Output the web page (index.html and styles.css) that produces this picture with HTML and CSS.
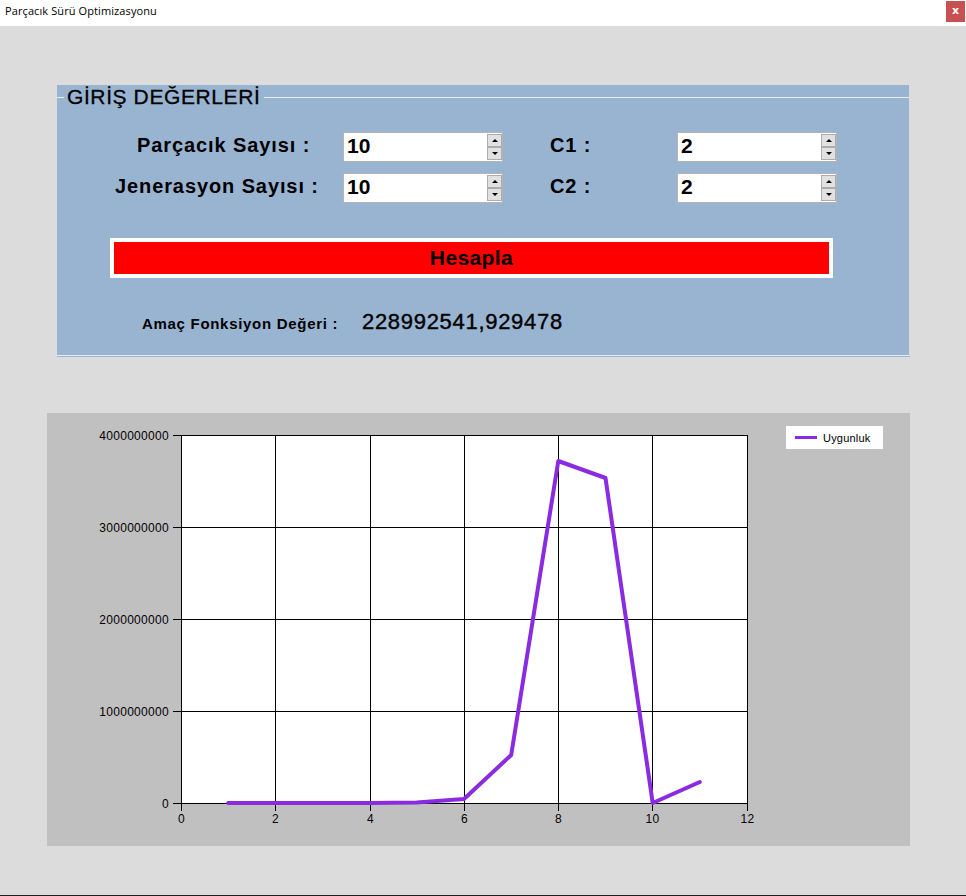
FILE: index.html
```html
<!DOCTYPE html>
<html lang="tr">
<head>
<meta charset="utf-8">
<title>Parçacık Sürü Optimizasyonu</title>
<link rel="stylesheet" href="styles.css">
</head>
<body>
<div class="titlebar">
  <span class="title">Parçacık Sürü Optimizasyonu</span>
  <span class="close">x</span>
</div>
<div class="content">
  <div class="group">
    <div class="group-head">
      <span class="hline short"></span>
      <span class="group-title">GİRİŞ DEĞERLERİ</span>
      <span class="hline long"></span>
    </div>
    <div class="row row1">
      <span class="lbl lbl-p">Parçacık Sayısı :</span>
      <div class="spin"><span class="val">10</span><span class="btns"><span class="b up"></span><span class="b down"></span></span></div>
      <span class="clbl">C1 :</span>
      <div class="spin"><span class="val">2</span><span class="btns"><span class="b up"></span><span class="b down"></span></span></div>
    </div>
    <div class="row row2">
      <span class="lbl lbl-j">Jenerasyon Sayısı :</span>
      <div class="spin"><span class="val">10</span><span class="btns"><span class="b up"></span><span class="b down"></span></span></div>
      <span class="clbl">C2 :</span>
      <div class="spin"><span class="val">2</span><span class="btns"><span class="b up"></span><span class="b down"></span></span></div>
    </div>
    <div class="btn-wrap"><span class="btn-text">Hesapla</span></div>
    <div class="result">
      <span class="res-lbl">Amaç Fonksiyon Değeri :</span>
      <span class="res-val">228992541,929478</span>
    </div>
  </div>
  <div class="group-base"></div>
  <div class="chart">
    <svg class="chart-svg" width="863" height="433" viewBox="0 0 863 433">
      <rect x="134" y="22" width="566" height="368" fill="#ffffff"/>
      <g stroke="#000" stroke-width="1" shape-rendering="crispEdges">
        <line x1="134.5" y1="22" x2="134.5" y2="398"/>
        <line x1="228.5" y1="22" x2="228.5" y2="398"/>
        <line x1="323.5" y1="22" x2="323.5" y2="398"/>
        <line x1="417.5" y1="22" x2="417.5" y2="398"/>
        <line x1="511.5" y1="22" x2="511.5" y2="398"/>
        <line x1="605.5" y1="22" x2="605.5" y2="398"/>
        <line x1="700.5" y1="22" x2="700.5" y2="398"/>
        <line x1="126" y1="22.5" x2="700" y2="22.5"/>
        <line x1="126" y1="114.5" x2="700" y2="114.5"/>
        <line x1="126" y1="206.5" x2="700" y2="206.5"/>
        <line x1="126" y1="298.5" x2="700" y2="298.5"/>
        <line x1="126" y1="390.5" x2="701" y2="390.5"/>
      </g>
      <g class="ylab" text-anchor="end">
        <text x="122" y="26.5">4000000000</text>
        <text x="122" y="118.5">3000000000</text>
        <text x="122" y="210.5">2000000000</text>
        <text x="122" y="302.5">1000000000</text>
        <text x="122" y="394.5">0</text>
      </g>
      <g class="xlab" text-anchor="middle">
        <text x="134.5" y="410">0</text>
        <text x="228.5" y="410">2</text>
        <text x="323.5" y="410">4</text>
        <text x="417.5" y="410">6</text>
        <text x="511.5" y="410">8</text>
        <text x="605.5" y="410">10</text>
        <text x="700.5" y="410">12</text>
      </g>
      <polyline fill="none" stroke="#8a2be2" stroke-width="4" stroke-linejoin="round" stroke-linecap="round"
        points="181.2,390 228.3,390 275.5,390 322.7,390 369.8,389.5 417,386 464.2,342 511.3,48 558.5,65 605.7,390 652.8,369"/>
    </svg>
    <div class="legend"><span class="legend-line"></span><span class="legend-text">Uygunluk</span></div>
  </div>
</div>
<div class="taskbar"></div>
</body>
</html>
```

FILE: styles.css
```css
* { box-sizing: border-box; }
html, body { margin: 0; padding: 0; }
body {
  width: 966px;
  height: 896px;
  overflow: hidden;
  background: #dcdcdc;
  font-family: "Liberation Sans", Arial, sans-serif;
  color: #000;
  display: flex;
  flex-direction: column;
}
.titlebar {
  height: 26px;
  background: #ffffff;
  display: flex;
  justify-content: space-between;
  align-items: flex-start;
  padding-left: 5px;
  flex: none;
}
.title {
  font-family: "Open Sans", "Noto Sans", sans-serif;
  font-size: 11px;
  letter-spacing: 0.1px;
  line-height: 22px;
}
.close {
  width: 19px;
  height: 21px;
  margin: 1px 1px 0 0;
  background: #c75050;
  color: #fff;
  font-family: "DejaVu Sans", sans-serif;
  font-weight: bold;
  font-size: 11px;
  line-height: 19px;
  text-align: center;
}
.content {
  flex: 1;
  display: flex;
  flex-direction: column;
}
.group {
  margin: 59px 0 0 57px;
  width: 852px;
  height: 271px;
  background: #99b4d1;
  border-bottom: 1px solid #e6edf5;
  display: flex;
  flex-direction: column;
}
.group-base {
  margin-left: 57px;
  width: 853px;
  height: 1px;
  background: #99b4d1;
}
.group-head {
  height: 24px;
  display: flex;
  align-items: center;
}
.hline { height: 1px; background: #e6edf5; }
.hline.short { width: 7px; }
.hline.long { flex: 1; margin-left: 4px; }
.group-title {
  margin-left: 3px;
  font-size: 21px;
  letter-spacing: 0.6px;
  line-height: 24px;
  -webkit-text-stroke: 0.3px #000;
}
.row {
  display: flex;
  align-items: center;
  height: 30px;
}
.row1 { margin-top: 23px; }
.row2 { margin-top: 11px; }
.lbl {
  width: 286px;
  font-weight: bold;
  font-size: 20px;
  letter-spacing: 0.9px;
  margin-top: -4px;
}
.lbl-p { padding-left: 80px; }
.lbl-j { padding-left: 58px; }
.clbl {
  width: 127px;
  margin-left: 47px;
  font-weight: bold;
  font-size: 20px;
  letter-spacing: 0.9px;
  margin-top: -4px;
}
.spin {
  width: 160px;
  height: 30px;
  background: #fff;
  border: 1px solid #b4b4b4;
  display: flex;
  justify-content: space-between;
  align-items: center;
}
.val {
  padding-left: 3px;
  font-weight: bold;
  font-size: 21px;
  margin-top: -2px;
}
.btns {
  display: flex;
  flex-direction: column;
  width: 15px;
  height: 28px;
  padding: 1px 0;
}
.b {
  flex: 1;
  background: #e1e1e1;
  border: 1px solid #adadad;
  display: flex;
  align-items: center;
  justify-content: center;
}
.b::before {
  content: "";
  width: 0;
  height: 0;
  border-left: 3px solid transparent;
  border-right: 3px solid transparent;
}
.b.up::before { border-bottom: 3px solid #000; }
.b.down::before { border-top: 3px solid #000; }
.btn-wrap {
  margin: 35px 0 0 53px;
  width: 723px;
  height: 40px;
  border: 4px solid #fff;
  background: #ff0000;
  display: flex;
  align-items: center;
  justify-content: center;
}
.btn-text {
  font-weight: bold;
  font-size: 21px;
  letter-spacing: 0.4px;
}
.result {
  margin-top: 31px;
  display: flex;
  align-items: baseline;
  height: 24px;
}
.res-lbl {
  margin-left: 85px;
  width: 220px;
  font-weight: bold;
  font-size: 15px;
  letter-spacing: 0.7px;
}
.res-val {
  font-size: 22px;
  letter-spacing: 0.7px;
  -webkit-text-stroke: 0.4px #000;
}
.chart {
  margin: 56px 0 0 47px;
  width: 863px;
  height: 433px;
  background: #c0c0c0;
  position: relative;
}
.chart-svg { display: block; }
.ylab text, .xlab text {
  font-family: "Liberation Sans", Arial, sans-serif;
  font-size: 12px;
  letter-spacing: 0.3px;
  fill: #000;
}
.legend {
  position: absolute;
  left: 739px;
  top: 13px;
  width: 97px;
  height: 23px;
  background: #fff;
  display: flex;
  align-items: center;
}
.legend-line {
  width: 22px;
  height: 3px;
  margin-left: 9px;
  background: #8a2be2;
}
.legend-text {
  margin-left: 6px;
  font-size: 11px;
  letter-spacing: 0.2px;
}
.taskbar {
  height: 1px;
  background: #1e1e1e;
  flex: none;
}
```
